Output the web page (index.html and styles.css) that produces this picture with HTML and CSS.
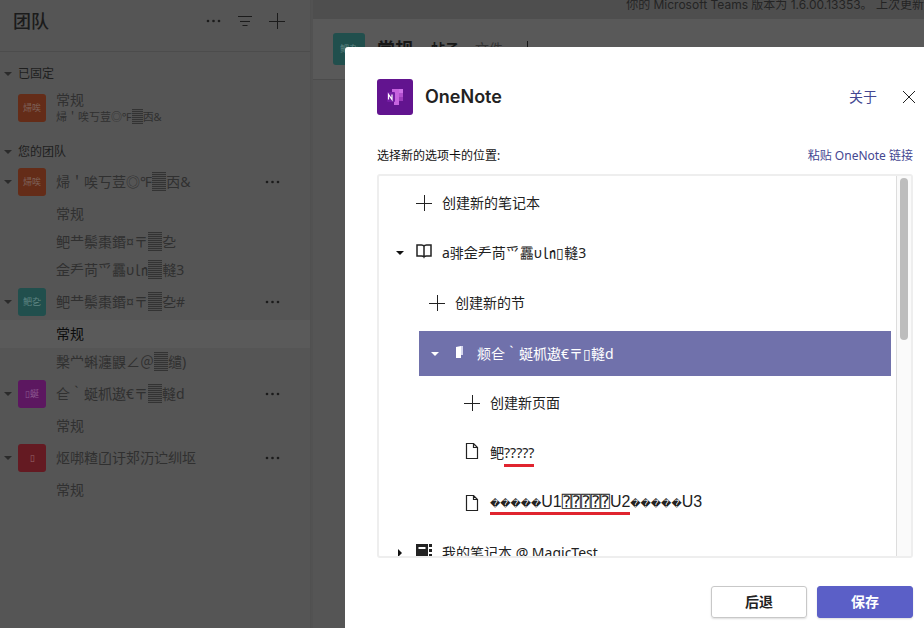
FILE: index.html
```html
<!DOCTYPE html>
<html lang="zh-CN">
<head>
<meta charset="utf-8">
<title>Microsoft Teams</title>
<link rel="stylesheet" href="styles.css">
</head>
<body>
<svg class="defs" aria-hidden="true">
  <symbol id="more" viewBox="0 0 16 16"><circle cx="3" cy="8" r="1.3"/><circle cx="8.500" cy="8" r="1.3"/><circle cx="14" cy="8" r="1.3"/></symbol>
  <symbol id="down" viewBox="0 0 8 8"><path d="M0 2h8L4 6z"/></symbol>
  <symbol id="right" viewBox="0 0 8 8"><path d="M2 0v8l4-4z"/></symbol>
  <symbol id="plus" viewBox="0 0 16 16"><path d="M0 8.5h16M8.5 0v16" fill="none" stroke="currentColor"/></symbol>
  <symbol id="page" viewBox="0 0 16 16"><path d="M2.5.5h7l4 4v11h-11zM9.5.5v4h4" fill="none" stroke="currentColor" stroke-width="1.2"/></symbol>
</svg>
<div class="app">
  <aside class="sidebar">
    <header class="side-head">
      <h1>团队</h1>
      <button aria-label="更多"><svg><use href="#more"/></svg></button>
      <button aria-label="筛选"><svg viewBox="0 0 16 16"><path d="M1 3.500h14M3 8.500h10M5.500 12.500h5" fill="none" stroke="currentColor"/></svg></button>
      <button aria-label="添加"><svg><use href="#plus"/></svg></button>
    </header>
    <nav class="teams">
      <h2><svg class="caret"><use href="#down"/></svg>已固定</h2>
      <a class="pinned" href="#"><span class="avatar orange">㷌唉</span><span class="two"><span>常规</span><small>㷌＇唉丂荳◎℉<i class="shade">▓</i>㐁&amp;</small></span></a>
      <h2><svg class="caret"><use href="#down"/></svg>您的团队</h2>
      <div class="team"><svg class="caret"><use href="#down"/></svg><span class="avatar orange">㷌唉</span><span class="name">㷌＇唉丂荳◎℉<i class="shade">▓</i>㐁&amp;</span><button aria-label="更多选项"><svg><use href="#more"/></svg></button></div>
      <a class="channel" href="#">常规</a>
      <a class="channel" href="#">鲃龷鬃棗鍲¤〒<i class="shade">▓</i>㐇</a>
      <a class="channel" href="#">佱龵苘⺤靐υ㏑<i class="shade">▓</i>䡫3</a>
      <div class="team"><svg class="caret"><use href="#down"/></svg><span class="avatar teal">鲃㐇</span><span class="name">鲃龷鬃棗鍲¤〒<i class="shade">▓</i>㐇#</span><button aria-label="更多选项"><svg><use href="#more"/></svg></button></div>
      <a class="channel current" href="#">常规</a>
      <a class="channel" href="#">檕龸蝌瀍鼳∠＠<i class="shade">▓</i>缱)</a>
      <div class="team"><svg class="caret"><use href="#down"/></svg><span class="avatar magenta">▯蜒</span><span class="name">仺｀蜒枛遨€〒<i class="shade">▓</i>䡫d</span><button aria-label="更多选项"><svg><use href="#more"/></svg></button></div>
      <a class="channel" href="#">常规</a>
      <div class="team"><svg class="caret"><use href="#down"/></svg><span class="avatar red">▯</span><span class="name">𬉼𠳐𥻗𠙶𬣙𨙸𬇕𬣞𬘓𫭟</span><button aria-label="更多选项"><svg><use href="#more"/></svg></button></div>
      <a class="channel" href="#">常规</a>
    </nav>
  </aside>
  <main class="main">
    <div class="notice">你的 Microsoft Teams 版本为 1.6.00.13353。 上次更新</div>
    <header class="chan-head"><span class="avatar big teal">鲃㐇</span><h2>常规</h2><a class="tab active" href="#">帖子</a><a class="tab" href="#">文件</a><button aria-label="添加选项卡"><svg><use href="#plus"/></svg></button></header>
  </main>
</div>
<section class="modal" role="dialog" aria-labelledby="title">
  <header class="modal-head">
    <svg class="logo" viewBox="0 0 36 36"><rect width="36" height="36" rx="3" fill="#62148f"/><path d="M13 10h13v16H13z" fill="#c763df"/><path d="M22 10h4v4h-4z" fill="#ce70e8"/><path d="M22 14h4v4h-4z" fill="#b34fd0"/><path d="M22 18h4v4h-4z" fill="#9b3bbb"/><path d="M22 22h4v4h-4z" fill="#62148f"/><path d="M12 10h3v3h-3zM12 23h5v3h-5z" fill="#62148f"/><rect x="10" y="13" width="8" height="10" rx="1" fill="#741da3"/><path d="M11.500 20.500v-5l3.500 5v-5" fill="none" stroke="#fff" stroke-width="1.200"/></svg>
    <h2 id="title">OneNote</h2>
    <a href="#">关于</a>
    <button aria-label="关闭"><svg viewBox="0 0 14 14"><path d="M1 1l12 12M13 1L1 13" fill="none" stroke="currentColor"/></svg></button>
  </header>
  <div class="prompt"><span>选择新的选项卡的位置:</span><a href="#">粘贴 OneNote 链接</a></div>
  <div class="picker">
    <div class="tree" role="tree">
      <div class="row notebook" role="treeitem"><svg class="icon"><use href="#plus"/></svg><span>创建新的笔记本</span></div>
      <div class="row expandable" role="treeitem"><svg class="caret"><use href="#down"/></svg><svg class="icon raised" viewBox="0 0 16 16"><path d="M1 2h4.500q2 0 2.500 1.200Q8.500 2 10.500 2H15v11h-4.500q-2 0-2.500 1-.5-1-2.500-1H1zM8 3v11" fill="none" stroke="currentColor" stroke-width="1.500"/></svg><span>a𬴂佱龵苘⺤靐υ㏑▯䡫3</span></div>
      <div class="row section" role="treeitem"><svg class="icon"><use href="#plus"/></svg><span>创建新的节</span></div>
      <div class="row selected" role="treeitem" aria-selected="true"><svg class="caret"><use href="#down"/></svg><svg class="icon raised" viewBox="0 0 16 16"><path d="M5 3l5-1v12H5z" fill="currentColor"/><path d="M10 2h2v9h-2z" fill="#d5d6ee"/></svg><span>𫖯仺｀蜒枛遨€〒▯䡫d</span></div>
      <div class="row page" role="treeitem"><svg class="icon"><use href="#plus"/></svg><span>创建新页面</span></div>
      <div class="row page" role="treeitem"><svg class="icon raised"><use href="#page"/></svg><span>鲃<span class="mark">?????</span></span></div>
      <div class="row page large" role="treeitem"><svg class="icon"><use href="#page"/></svg><span><span class="mark"><span class="bad">�����</span>U1<span class="boxed">⍰⍰⍰⍰⍰</span>U2</span><span class="bad">�����</span>U3</span></div>
      <div class="row expandable" role="treeitem"><svg class="caret"><use href="#right"/></svg><svg class="icon raised" viewBox="0 0 16 16"><path d="M0 1h12v14H0zM13 1h3v3h-3zM13 6h3v3h-3zM13 11h3v3h-3z" fill="currentColor"/><path d="M2.500 5h7" stroke="#fff" stroke-width="2"/></svg><span>我的笔记本 @ MagicTest</span></div>
    </div>
    <div class="track"><div class="thumb"></div></div>
  </div>
  <footer><button>后退</button><button class="primary">保存</button></footer>
</section>
</body>
</html>
```
FILE: styles.css
```css
* { box-sizing: border-box; }
body {
  margin: 0;
  height: 100vh;
  overflow: hidden;
  font: 14px/20px "Noto Sans", "Noto Sans CJK SC", sans-serif;
  color: #222;
}
h1, h2 { margin: 0; font-weight: 400; }
a { color: inherit; text-decoration: none; }
button { font: inherit; color: inherit; background: none; border: 0; padding: 0; }
svg { display: block; width: 16px; height: 16px; flex: none; fill: currentColor; }
svg.caret { width: 8px; height: 8px; }
.defs { display: none; }

.app { display: grid; grid-template-columns: 311px 1fr; height: 100%; background: #555; }
.sidebar { background: #555; color: #303030; overflow: hidden; border-right: 1px solid #505050; }
.side-head { display: flex; align-items: center; gap: 16px; height: 52px; padding: 0 25px 10px 13px; border-bottom: 1px solid #4c4c4c; color: #1b1b1b; }
.side-head h1 { flex: 1; font-size: 18px; font-weight: 500; }
.teams { padding-top: 8px; white-space: nowrap; }
.teams h2 { display: flex; align-items: center; gap: 6px; height: 26px; padding: 2px 0 0 4px; font-size: 12px; color: #1e1e1e; }
.sidebar .caret { color: #2b2b2b; }
.avatar { display: flex; align-items: center; justify-content: center; width: 28px; height: 28px; border-radius: 3px; font-size: 9px; color: #7e6258; flex: none; }
.orange { background: #642c18; }
.teal { background: #214f4d; color: #5f8583; }
.magenta { background: #5c1760; color: #8c5a90; }
.red { background: #641a22; color: #96656a; }
.pinned { display: flex; align-items: center; gap: 10px; height: 44px; margin-bottom: 8px; padding-left: 18px; }
.two { display: grid; line-height: 17px; }
.two small { font-size: 11px; }
.team { display: flex; align-items: center; height: 36px; padding: 0 30px 0 4px; }
.team button { color: #1b1b1b; }
.team .avatar { margin: 0 10px 0 6px; }
.name { flex: 1; }
.channel { display: block; height: 28px; padding-left: 56px; line-height: 28px; }
.current { background: #5a5a5a; color: #0c0c0c; }
.shade { font-style: normal; color: transparent; background: repeating-linear-gradient(#333 0 1px, #505050 1px 2px); }

.main { min-width: 0; border-left: 2px solid #525252; }
.notice { height: 19px; line-height: 10px; background: #4e4e4e; color: #242424; text-align: right; white-space: nowrap; font-size: 12px; font-family: Inter, "Noto Sans CJK SC", sans-serif; }
.chan-head { display: flex; align-items: center; height: 61px; padding-left: 20px; background: #595959; border-bottom: 1px solid #4c4c4c; color: #171717; }
.chan-head h2 { margin: 0 18px 0 12px; font-size: 18px; font-weight: 700; }
.big { width: 32px; height: 32px; }
.tab { margin-right: 16px; color: #333; }
.tab.active { color: #171717; font-weight: 700; }

.modal { position: absolute; inset: 47px 0 0 345px; display: flex; flex-direction: column; padding: 32px 11px 10px 32px; background: #fff; border-radius: 3px 0 0 0; }
.modal-head { display: flex; align-items: center; height: 36px; margin-right: -3px; }
.logo { width: 36px; height: 36px; margin-right: 12px; }
.modal-head h2 { flex: 1; font: 600 18px/24px Inter, sans-serif; }
.modal a { color: #444791; }
.modal-head a { margin-right: 25px; }
.modal-head button svg { width: 14px; height: 14px; }
.prompt { display: flex; justify-content: space-between; margin: 31px 0 8px; font-size: 12px; color: #111; }
.picker { flex: 1; min-height: 0; display: flex; border: 2px solid #eee; border-radius: 3px; }
.tree { flex: 1; overflow: hidden; padding-top: 2px; }
.row { display: flex; align-items: center; gap: 10px; height: 50px; padding-left: 37px; white-space: nowrap; }
.row .caret { color: #111; margin-right: 2px; }
.row.expandable { padding-left: 17px; }
.row.section { padding-left: 50px; }
.row.page { padding-left: 85px; }
.row.selected { height: 45px; margin: 3px 5px 2px 40px; padding-left: 12px; background: #7071ab; color: #fff; }
.row.selected .caret { color: #fff; margin-right: 2px; }
.raised { margin-bottom: 4px; }
.mark { padding-bottom: 2px; border-bottom: 3px solid #e0242f; }
.large { font-family: "Liberation Sans", "Noto Sans CJK SC", sans-serif; font-size: 16px; }
.bad { font: 10px/20px "DejaVu Sans", sans-serif; }
.boxed { font: 16px/20px "DejaVu Sans Mono", monospace; }
.track { width: 15px; padding: 2px 3px; background: #fafafa; border-left: 1px solid #ddd; }
.thumb { height: 43%; border-radius: 4px; background: #bdbdbd; width: 8px; }
footer { display: flex; justify-content: flex-end; gap: 10px; margin: 28px 0 0; }
footer button { width: 96px; height: 32px; border: 1px solid #c8c8c8; border-radius: 3px; font-weight: 700; box-shadow: 0 1px 2px #0002; }
footer .primary { background: #5b5fc7; border-color: #5b5fc7; color: #fff; }
```
